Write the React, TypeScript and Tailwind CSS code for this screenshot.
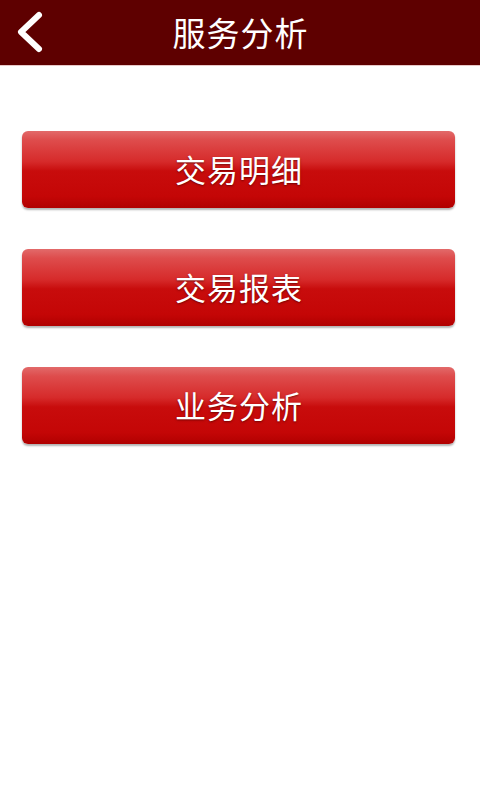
const items = ['交易明细', '交易报表', '业务分析'];

export default function App() {
  return (
    <div
      className="w-[480px] h-[800px] bg-white"
      style={{ fontFamily: '"Noto Sans CJK SC", "Noto Sans", sans-serif' }}
    >
      {/* Header */}
      <div className="relative h-[66px] bg-[#5e0000] border-b border-[#e8c8c8] flex items-center justify-center">
        <button className="absolute left-0 top-0 w-[60px] h-[66px]">
          <svg width="60" height="66" viewBox="0 0 60 66" fill="none">
            <path
              d="M39 15 L21 32 L39 49"
              stroke="white"
              strokeWidth="6"
              strokeLinecap="round"
              strokeLinejoin="round"
            />
          </svg>
        </button>
        <h1 className="text-white text-[33px] leading-none tracking-[1px] pl-[1px]">服务分析</h1>
      </div>

      {/* Menu buttons */}
      <div className="flex flex-col gap-[41px] px-[22px] pt-[65px]">
        {items.map((label) => (
          <button
            key={label}
            className="h-[77px] w-[433px] rounded-[6px] flex items-center justify-center text-white text-[31px] tracking-[1px] pl-[1px] shadow-[0_2px_2px_rgba(0,0,0,0.3)] bg-[linear-gradient(to_bottom,#e26a6a_0%,#de4c4c_12%,#d62a2a_40%,#c80c0c_52%,#c40606_85%,#b00000_100%)] [text-shadow:0_1px_2px_rgba(80,0,0,0.7)]"
          >
            {label}
          </button>
        ))}
      </div>
    </div>
  );
}
